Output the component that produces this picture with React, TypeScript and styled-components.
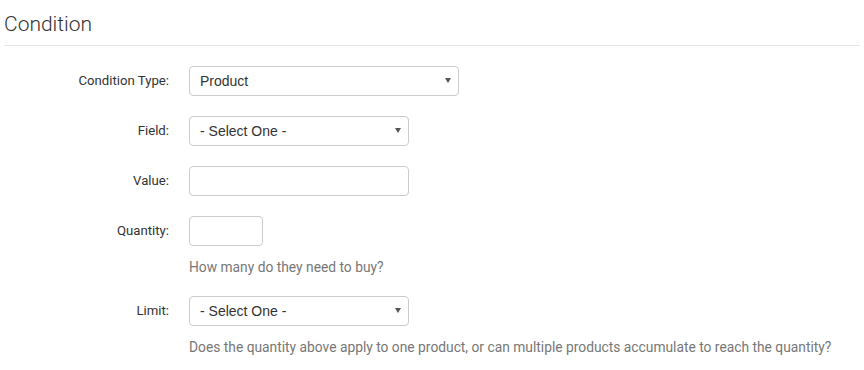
import React from "react";
import styled, { createGlobalStyle } from "styled-components";

const Global = createGlobalStyle`
  html, body { margin: 0; padding: 0; background: #fff; }
  body { font-family: Roboto, "Liberation Sans", Arial, sans-serif; color: #333; }
  * { box-sizing: border-box; }
`;

const Page = styled.div`
  padding: 0 4px;
  width: 864px;
`;

const Heading = styled.h3`
  margin: 0;
  padding-top: 11px;
  font-family: Roboto, sans-serif;
  font-weight: 300;
  font-size: 21px;
  line-height: 26px;
  color: #333;
  padding-bottom: 8px;
  border-bottom: 1px solid #e5e5e5;
`;

const Form = styled.div`
  display: grid;
  grid-template-columns: 165px 1fr;
  column-gap: 20px;
  padding-top: 20px;
`;

const Label = styled.label`
  font-size: 13.2px;
  line-height: 30px;
  height: 30px;
  text-align: right;
  color: #333;
`;

const Cell = styled.div<{ $last?: boolean }>`
  display: flex;
  flex-direction: column;
  align-items: flex-start;
  margin-bottom: ${(p) => (p.$last ? "0" : "20px")};
`;

const SelectWrap = styled.div<{ $w: number }>`
  position: relative;
  width: ${(p) => p.$w}px;
  height: 30px;
`;

const Select = styled.div`
  width: 100%;
  height: 30px;
  border: 1px solid #ccc;
  border-radius: 4px;
  background: #fff;
  padding: 0 24px 0 10px;
  font-family: "Liberation Sans", Arial, sans-serif;
  font-size: 14px;
  line-height: 28px;
  color: #333;
`;

const Arrow = styled.span`
  position: absolute;
  right: 8px;
  top: 12px;
  width: 0;
  height: 0;
  border-left: 3px solid transparent;
  border-right: 3px solid transparent;
  border-top: 5px solid #555;
`;

const Input = styled.input<{ $w: number }>`
  width: ${(p) => p.$w}px;
  height: 30px;
  border: 1px solid #ccc;
  border-radius: 4px;
  background: #fff;
  padding: 0 10px;
  font-size: 14px;
  outline: none;
`;

const Help = styled.div`
  margin-top: 12px;
  font-size: 13.8px;
  line-height: 18px;
  color: #777;
  white-space: nowrap;
`;

const Dropdown = ({ value, w }: { value: string; w: number }) => (
  <SelectWrap $w={w}>
    <Select>{value}</Select>
    <Arrow />
  </SelectWrap>
);

export default function App() {
  return (
    <Page>
      <Global />
      <Heading>Condition</Heading>
      <Form>
        <Label>Condition Type:</Label>
        <Cell>
          <Dropdown value="Product" w={270} />
        </Cell>
        <Label>Field:</Label>
        <Cell>
          <Dropdown value="- Select One -" w={220} />
        </Cell>
        <Label>Value:</Label>
        <Cell>
          <Input $w={220} />
        </Cell>
        <Label>Quantity:</Label>
        <Cell>
          <Input $w={74} />
          <Help>How many do they need to buy?</Help>
        </Cell>
        <Label>Limit:</Label>
        <Cell $last>
          <Dropdown value="- Select One -" w={220} />
          <Help>
            Does the quantity above apply to one product, or can multiple products accumulate to reach the quantity?
          </Help>
        </Cell>
      </Form>
    </Page>
  );
}
